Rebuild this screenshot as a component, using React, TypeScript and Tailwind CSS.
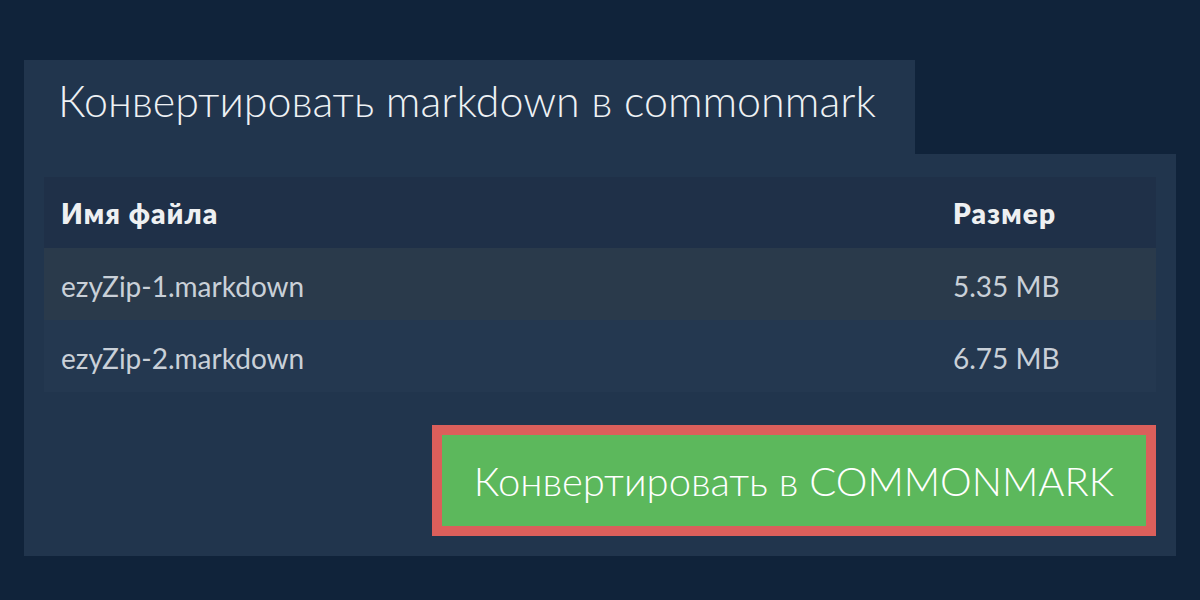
const files = [
  { name: 'ezyZip-1.markdown', size: '5.35 MB', bg: 'bg-[#2a3a4b]' },
  { name: 'ezyZip-2.markdown', size: '6.75 MB', bg: 'bg-[#243850]' },
];

export default function App() {
  return (
    <div className="w-[1200px] h-[600px] bg-[#10233a] px-6 pt-[60px] font-['Lato',sans-serif] overflow-hidden">
      {/* Title tab */}
      <div className="w-[891px] h-[94px] bg-[#21354d] pl-[34px] pt-[16px]">
        <h1 className="text-[43px] font-light text-[#eef1f4] leading-[50px] whitespace-nowrap">
          Конвертировать markdown в commonmark
        </h1>
      </div>

      {/* Panel */}
      <div className="bg-[#21354d] px-5 pt-[23px] pb-5">
        <div className="w-full">
          <div className="grid grid-cols-[1fr_220px] h-[71px] items-center bg-[#1f3048] text-[28px] tracking-[1.2px] font-extrabold text-[#eef0f2]">
            <div className="pl-[17px]">Имя файла</div>
            <div className="pl-[17px]">Размер</div>
          </div>
          {files.map((f) => (
            <div
              key={f.name}
              className={`grid grid-cols-[1fr_220px] h-[72px] items-center text-[28px] text-[#c9d0d8] ${f.bg}`}
            >
              <div className="pl-[17px] pt-[3px]">{f.name}</div>
              <div className="pl-[17px] pt-[3px]">{f.size}</div>
            </div>
          ))}
        </div>

        <div className="flex justify-end mt-[33px]">
          <button className="w-[724px] h-[111px] bg-[#5cb85c] border-[10px] border-[#db5f5b] text-[40px] font-light text-white whitespace-nowrap">
            Конвертировать в COMMONMARK
          </button>
        </div>
      </div>
    </div>
  );
}
